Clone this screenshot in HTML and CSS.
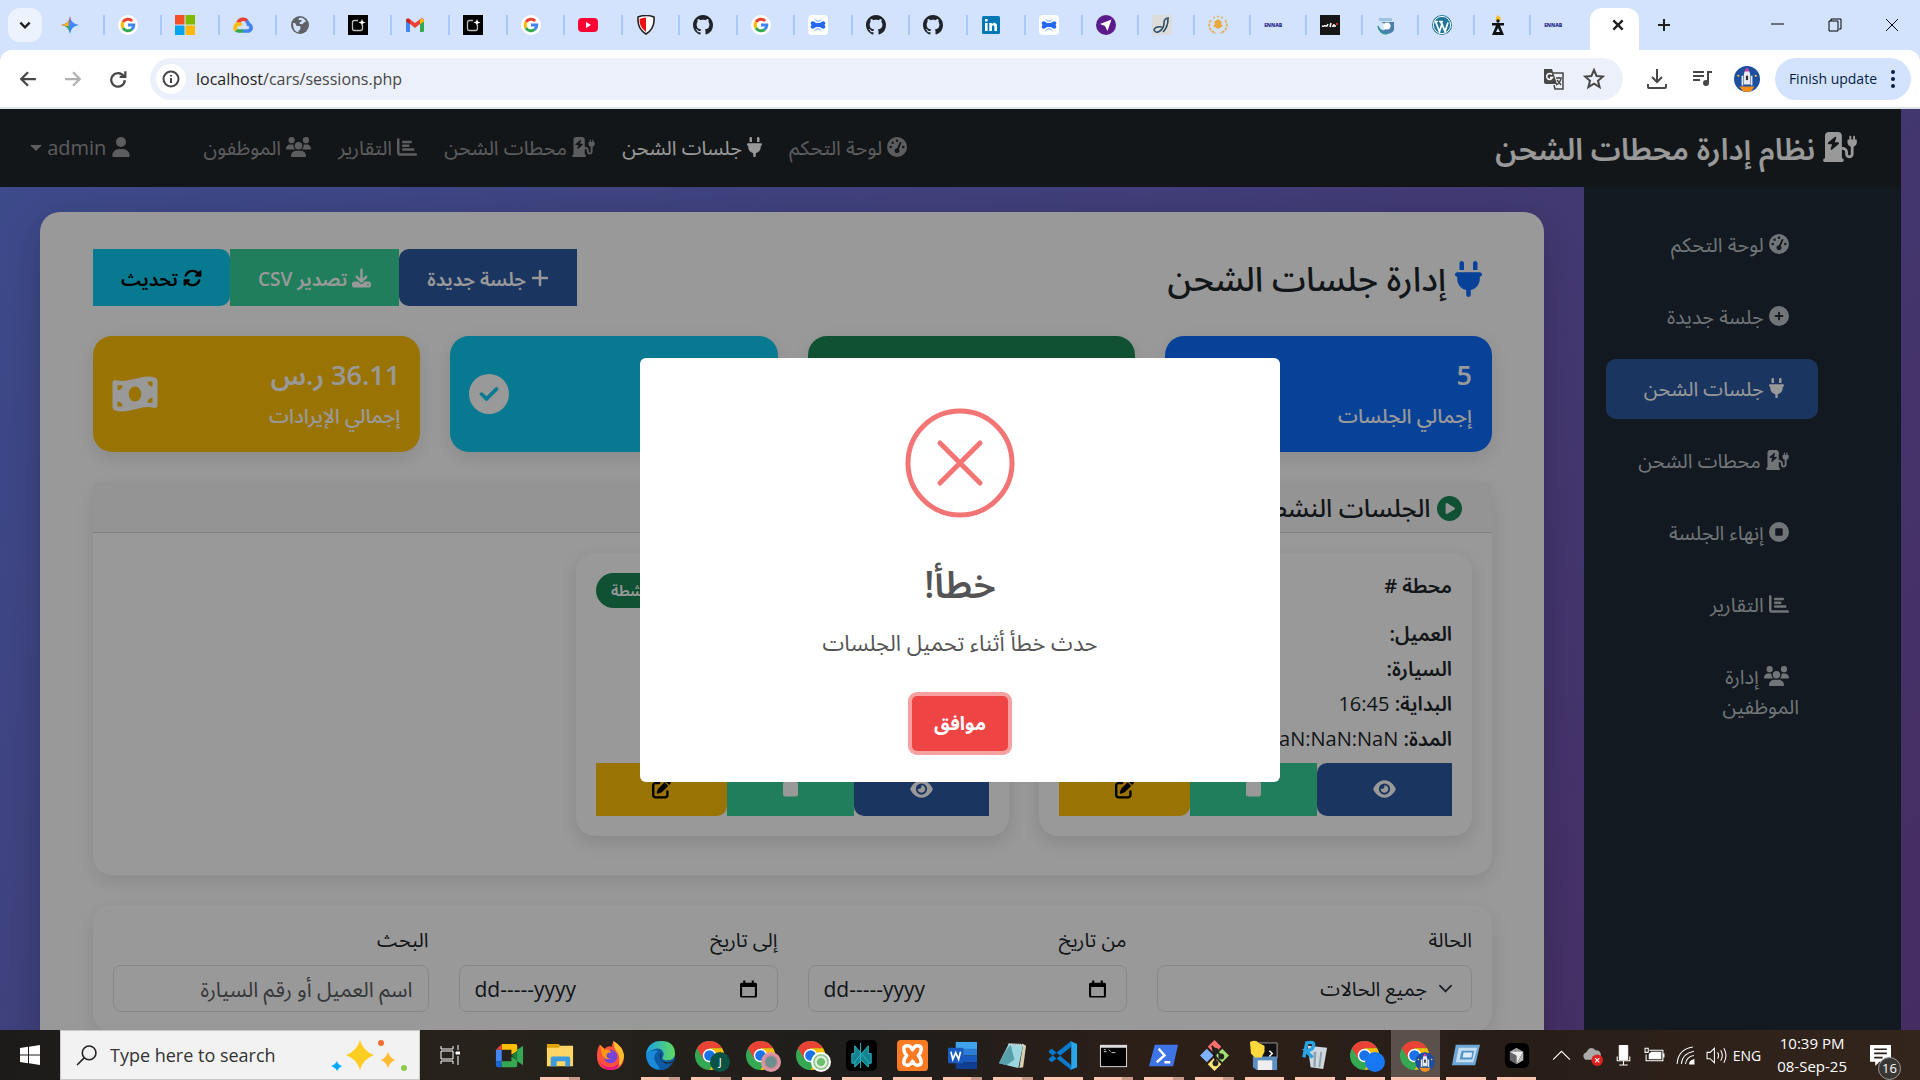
FILE: index.html
```html
<!DOCTYPE html>
<html lang="ar">
<head>
    <meta charset="UTF-8">
    <meta name="viewport" content="width=device-width, initial-scale=1.0">
    <title>إدارة جلسات الشحن</title>
    <link rel="stylesheet" href="styles.css">
</head>
<body>
    <svg class="defs" aria-hidden="true">
        <!-- page icons -->
        <symbol id="plug" viewBox="0 0 384 512"><path d="M96 0C78.3 0 64 14.3 64 32v96h64V32c0-17.7-14.3-32-32-32zM288 0c-17.7 0-32 14.3-32 32v96h64V32c0-17.7-14.3-32-32-32zM32 160c-17.7 0-32 14.3-32 32s14.3 32 32 32v32c0 77.4 55 142 128 156.8V480c0 17.7 14.3 32 32 32s32-14.3 32-32V412.8C297 398 352 333.4 352 256V224c17.7 0 32-14.3 32-32s-14.3-32-32-32H32z"/></symbol>
        <symbol id="gauge" viewBox="0 0 512 512"><path fill-rule="evenodd" d="M0 256a256 256 0 1 1 512 0A256 256 0 1 1 0 256zM288 96a32 32 0 1 0-64 0 32 32 0 1 0 64 0zM256 416c35.3 0 64-28.7 64-64c0-17.4-6.9-33.1-18.1-44.6L366 161.7c5.3-12.1-.2-26.3-12.3-31.6s-26.3 .2-31.6 12.3L257.9 288c-.6 0-1.3 0-1.9 0c-35.3 0-64 28.7-64 64s28.7 64 64 64zM176 144a32 32 0 1 0-64 0 32 32 0 1 0 64 0zM96 288a32 32 0 1 0 0-64 32 32 0 1 0 0 64zm352-32a32 32 0 1 0-64 0 32 32 0 1 0 64 0z"/></symbol>
        <symbol id="station" viewBox="0 0 576 512"><path fill-rule="evenodd" d="M96 0C60.7 0 32 28.7 32 64V448c-17.7 0-32 14.3-32 32s14.3 32 32 32H320c17.7 0 32-14.3 32-32s-14.3-32-32-32V304h16c22.1 0 40 17.9 40 40v32c0 39.8 32.2 72 72 72s72-32.2 72-72V252.3c32.5-10.2 56-40.5 56-76.3V144c0-8.8-7.2-16-16-16H544V80c0-8.8-7.2-16-16-16s-16 7.2-16 16v48H480V80c0-8.8-7.2-16-16-16s-16 7.2-16 16v48H432c-8.8 0-16 7.2-16 16v32c0 35.8 23.5 66.1 56 76.3V376c0 13.3-10.7 24-24 24s-24-10.7-24-24V344c0-48.6-39.4-88-88-88H320V64c0-35.3-28.7-64-64-64H96zM216.9 82.7c6 4 8.5 11.5 6.3 18.3l-25 74.9H256c6.7 0 12.7 4.2 15 10.4s.5 13.3-4.6 17.7l-112 96c-5.5 4.7-13.4 5.1-19.3 1.1s-8.5-11.5-6.3-18.3l25-74.9H96c-6.7 0-12.7-4.2-15-10.4s-.5-13.3 4.6-17.7l112-96c5.5-4.7 13.4-5.1 19.3-1.1z"/></symbol>
        <symbol id="chart" viewBox="0 0 512 512"><path d="M32 32c17.7 0 32 14.3 32 32V400c0 8.8 7.2 16 16 16H480c17.7 0 32 14.3 32 32s-14.3 32-32 32H80c-44.2 0-80-35.8-80-80V64C0 46.3 14.3 32 32 32zm96 96c0-17.7 14.3-32 32-32l192 0c17.7 0 32 14.3 32 32s-14.3 32-32 32H160c-17.7 0-32-14.3-32-32zm32 64H288c17.7 0 32 14.3 32 32s-14.3 32-32 32H160c-17.7 0-32-14.3-32-32s14.3-32 32-32zm0 96H416c17.7 0 32 14.3 32 32s-14.3 32-32 32H160c-17.7 0-32-14.3-32-32s14.3-32 32-32z"/></symbol>
        <symbol id="users" viewBox="0 0 640 512"><path d="M144 0a80 80 0 1 1 0 160A80 80 0 1 1 144 0zM512 0a80 80 0 1 1 0 160A80 80 0 1 1 512 0zM0 298.7C0 239.8 47.8 192 106.7 192h42.7c15.9 0 31 3.5 44.6 9.7c-1.3 7.2-1.9 14.7-1.9 22.3c0 38.2 16.8 72.5 43.3 96c-.2 0-.4 0-.7 0H21.3C9.6 320 0 310.4 0 298.7zM405.3 320c-.2 0-.4 0-.7 0c26.6-23.5 43.3-57.8 43.3-96c0-7.6-.7-15-1.9-22.3c13.6-6.3 28.7-9.7 44.6-9.7h42.7C592.2 192 640 239.8 640 298.7c0 11.8-9.6 21.3-21.3 21.3H405.3zM224 224a96 96 0 1 1 192 0 96 96 0 1 1 -192 0zM128 485.3C128 411.7 187.7 352 261.3 352H378.7C452.3 352 512 411.7 512 485.3c0 14.7-11.9 26.7-26.7 26.7H154.7c-14.7 0-26.7-11.9-26.7-26.7z"/></symbol>
        <symbol id="user" viewBox="0 0 448 512"><path d="M224 256A128 128 0 1 0 224 0a128 128 0 1 0 0 256zm-45.7 48C79.8 304 0 383.8 0 482.3C0 498.7 13.3 512 29.7 512H418.3c16.4 0 29.7-13.3 29.7-29.7C448 383.8 368.2 304 269.7 304H178.3z"/></symbol>
        <symbol id="circle-plus" viewBox="0 0 512 512"><path fill-rule="evenodd" d="M256 512A256 256 0 1 0 256 0a256 256 0 1 0 0 512zM232 344V280H168c-13.3 0-24-10.7-24-24s10.7-24 24-24h64V168c0-13.3 10.7-24 24-24s24 10.7 24 24v64h64c13.3 0 24 10.7 24 24s-10.7 24-24 24H280v64c0 13.3-10.7 24-24 24s-24-10.7-24-24z"/></symbol>
        <symbol id="circle-stop" viewBox="0 0 512 512"><path fill-rule="evenodd" d="M256 512A256 256 0 1 0 256 0a256 256 0 1 0 0 512zM192 160H320c17.7 0 32 14.3 32 32V320c0 17.7-14.3 32-32 32H192c-17.7 0-32-14.3-32-32V192c0-17.7 14.3-32 32-32z"/></symbol>
        <symbol id="circle-play" viewBox="0 0 512 512"><path fill-rule="evenodd" d="M0 256a256 256 0 1 1 512 0A256 256 0 1 1 0 256zM188.3 147.1c-7.6 4.2-12.3 12.3-12.3 20.9V344c0 8.7 4.7 16.7 12.3 20.9s16.8 4.1 24.3-.5l144-88c7.1-4.4 11.5-12.1 11.5-20.5s-4.4-16.1-11.5-20.5l-144-88c-7.4-4.5-16.7-4.7-24.3-.5z"/></symbol>
        <symbol id="circle-check" viewBox="0 0 512 512"><path fill-rule="evenodd" d="M256 512A256 256 0 1 0 256 0a256 256 0 1 0 0 512zM369 209L241 337c-9.4 9.4-24.6 9.4-33.9 0l-64-64c-9.4-9.4-9.4-24.6 0-33.9s24.6-9.4 33.9 0l47 47L335 175c9.4-9.4 24.6-9.4 33.9 0s9.4 24.6 0 33.9z"/></symbol>
        <symbol id="plus" viewBox="0 0 448 512"><path d="M256 80c0-17.7-14.3-32-32-32s-32 14.3-32 32V224H48c-17.7 0-32 14.3-32 32s14.3 32 32 32H192V432c0 17.7 14.3 32 32 32s32-14.3 32-32V288H400c17.7 0 32-14.3 32-32s-14.3-32-32-32H256V80z"/></symbol>
        <symbol id="download" viewBox="0 0 512 512"><path fill-rule="evenodd" d="M288 32c0-17.7-14.3-32-32-32s-32 14.3-32 32V274.7l-73.4-73.4c-12.5-12.5-32.8-12.5-45.3 0s-12.5 32.8 0 45.3l128 128c12.5 12.5 32.8 12.5 45.3 0l128-128c12.5-12.5 12.5-32.8 0-45.3s-32.8-12.5-45.3 0L288 274.7V32zM64 352c-35.3 0-64 28.7-64 64v32c0 35.3 28.7 64 64 64H448c35.3 0 64-28.7 64-64V416c0-35.3-28.7-64-64-64H346.5l-45.3 45.3c-25 25-65.5 25-90.5 0L165.5 352H64zm368 56a24 24 0 1 1 0 48 24 24 0 1 1 0-48z"/></symbol>
        <symbol id="sync" viewBox="0 0 512 512"><path d="M142.9 142.9c62.2-62.2 162.7-62.5 225.3-1L327 183c-6.9 6.9-8.9 17.2-5.2 26.2s12.5 14.8 22.2 14.8H472c13.3 0 24-10.7 24-24V72c0-9.7-5.8-18.5-14.8-22.2s-19.3-1.7-26.2 5.2L413.4 96.6c-87.6-86.5-228.7-86.2-315.8 1C73.2 122 55.6 150.7 44.8 181.4c-5.9 16.7 2.9 34.9 19.5 40.8s34.9-2.9 40.8-19.5c7.7-21.8 20.2-42.3 37.8-59.8zM16 312V440c0 9.7 5.8 18.5 14.8 22.2s19.3 1.7 26.2-5.2l41.6-41.6c87.6 86.5 228.7 86.2 315.8-1c24.4-24.4 42.1-53.1 52.9-83.7c5.9-16.7-2.9-34.9-19.5-40.8s-34.9 2.9-40.8 19.5c-7.7 21.8-20.2 42.3-37.8 59.8c-62.2 62.2-162.7 62.5-225.3 1L185 329c6.9-6.9 8.9-17.2 5.2-26.2s-12.5-14.8-22.2-14.8H40c-13.3 0-24 10.7-24 24z"/></symbol>
        <symbol id="money" viewBox="0 0 576 512"><path fill-rule="evenodd" d="M0 112.5V422.3c0 18 10.1 35 27 41.3c87 32.5 174 10.3 261-11.9c79.8-20.3 159.6-40.7 239.3-18.9c23 6.3 48.7-9.5 48.7-33.4V89.7c0-18-10.1-35-27-41.3C462 15.9 375 38.1 288 60.3C208.2 80.6 128.4 100.9 48.7 79.1C25.6 72.8 0 88.6 0 112.5zM288 352c-44.2 0-80-43-80-96s35.8-96 80-96s80 43 80 96s-35.8 96-80 96zM64 352c35.3 0 64 28.7 64 64H64V352zm64-208c0 35.3-28.7 64-64 64V144h64zM512 304v64H448c0-35.3 28.7-64 64-64zM448 96h64v64c-35.3 0-64-28.7-64-64z"/></symbol>
        <symbol id="eye" viewBox="0 0 576 512"><path fill-rule="evenodd" d="M288 32c-80.8 0-145.5 36.8-192.6 80.6C48.6 156 17.3 208 2.5 243.7c-3.3 7.9-3.3 16.7 0 24.6C17.3 304 48.6 356 95.4 399.4C142.5 443.2 207.2 480 288 480s145.5-36.8 192.6-80.6c46.8-43.5 78.1-95.4 93-131.1c3.3-7.9 3.3-16.7 0-24.6c-14.9-35.7-46.2-87.7-93-131.1C433.5 68.8 368.8 32 288 32zM144 256a144 144 0 1 1 288 0 144 144 0 1 1 -288 0zm144-64c0 35.3-28.7 64-64 64c-7.1 0-13.9-1.2-20.3-3.3c-5.5-1.8-11.9 1.6-11.7 7.4c.3 6.9 1.3 13.8 3.2 20.7c13.7 51.2 66.4 81.6 117.6 67.9s81.6-66.4 67.9-117.6c-11.1-41.5-47.8-69.4-88.6-71.1c-5.8-.2-9.2 6.1-7.4 11.7c2.1 6.4 3.3 13.2 3.3 20.3z"/></symbol>
        <symbol id="stop" viewBox="0 0 384 512"><rect x="0" y="64" width="384" height="384" rx="64"/></symbol>
        <symbol id="edit" viewBox="0 0 512 512"><path d="M471.6 21.7c-21.9-21.9-57.3-21.9-79.2 0L362.3 51.7l97.9 97.9 30.1-30.1c21.9-21.9 21.9-57.3 0-79.2L471.6 21.7zm-299.2 220c-6.1 6.1-10.8 13.6-13.5 21.9l-29.6 88.8c-2.9 8.6-.6 18.1 5.8 24.6s15.9 8.7 24.6 5.8l88.8-29.6c8.2-2.7 15.7-7.4 21.9-13.5L437.7 172.3 339.7 74.3 172.4 241.7zM96 64C43 64 0 107 0 160V416c0 53 43 96 96 96H352c53 0 96-43 96-96V320c0-17.7-14.3-32-32-32s-32 14.3-32 32v96c0 17.7-14.3 32-32 32H96c-17.7 0-32-14.3-32-32V160c0-17.7 14.3-32 32-32h96c17.7 0 32-14.3 32-32s-14.3-32-32-32H96z"/></symbol>
        <symbol id="calendar" viewBox="0 0 16 16"><path fill-rule="evenodd" d="M3 0h2v2h6V0h2v2h1.500q1.500 0 1.500 1.500v11q0 1.500-1.500 1.500h-13Q0 16 0 14.500v-11Q0 2 1.500 2H3zM2 6v8.500h12V6z"/></symbol>

        <!-- tab icons -->
        <linearGradient id="gem" x1="0" y1="0" x2="1" y2="1"><stop offset=".2" stop-color="#ea4335"/><stop offset=".45" stop-color="#4f86f5"/><stop offset=".7" stop-color="#3186ff"/></linearGradient>
        <symbol id="t-gemini" viewBox="0 0 20 20"><path fill="url(#gem)" d="M10 1q1 8 9 9-8 1-9 9-1-8-9-9 8-1 9-9z"/><path fill="#fbbc04" d="M1 10q6-.6 8-5-1 5 0 7-3-1.600-8-2z"/><path fill="#34a853" d="M5 11q3 1 4.500 5V11z"/></symbol>
        <symbol id="t-google" viewBox="0 0 20 20"><circle cx="10" cy="10" r="10" fill="#fff"/><g fill="none" stroke-width="3"><path stroke="#ea4335" d="M5 7.100A5.800 5.800 0 0 1 14.200 6"/><path stroke="#fbbc05" d="M5 7.100a5.800 5.800 0 0 0 0 5.800"/><path stroke="#34a853" d="M5 12.900a5.800 5.800 0 0 0 8.800 1.400"/><path stroke="#4285f4" d="M10 10h5.800a5.800 5.800 0 0 1-2 4.300"/></g></symbol>
        <symbol id="t-ms" viewBox="0 0 20 20"><path fill="#f25022" d="M0 0h9.500v9.500H0z"/><path fill="#7fba00" d="M10.500 0H20v9.500h-9.500z"/><path fill="#00a4ef" d="M0 10.500h9.500V20H0z"/><path fill="#ffb900" d="M10.500 10.500H20V20h-9.500z"/></symbol>
        <symbol id="t-cloud" viewBox="0 0 20 20"><g fill="none" stroke-width="3.600"><path stroke="#ea4335" d="M5 8a5.300 5.300 0 0 1 9-2"/><path stroke="#4285f4" d="M13.500 5.800a5 5 0 0 1 1.800 3.400 3.500 3.500 0 0 1 .2 6.800H10"/><path stroke="#34a853" d="M10 16H5.500a4 4 0 0 1-2.500-1"/><path stroke="#fbbc05" d="M3.200 15.200A3.800 3.800 0 0 1 5.500 8.800q1.500 0 3 1.500"/></g></symbol>
        <symbol id="t-globe" viewBox="0 0 20 20"><circle cx="10" cy="10" r="9" fill="#5f6368"/><path fill="#d3e3fd" d="M3 8q3-.5 3 1.500t2.500 1.500 2 2-1.500 2.500-.5 2Q3 16.500 3 8zM9 3q5-1 7 4-2-.5-2.500 1T10.500 9 11 6.500 8.500 5z"/></symbol>
        <symbol id="t-tile" viewBox="0 0 20 20"><path fill="#000" d="M0 0h20v20H0z"/><path fill="none" stroke="#bbb" stroke-width="1.300" d="M10 5.500H6.500q-2 0-2 2v6q0 2 2 2h6q2 0 2-2V10"/><path fill="#fff" d="M14 4l1 2.500 2.500 1-2.500 1-1 2.500-1-2.500-2.500-1 2.500-1z"/></symbol>
        <symbol id="t-gmail" viewBox="0 0 20 20"><path fill="#4285f4" d="M1 6v10q0 1 1 1h3V8z"/><path fill="#34a853" d="M19 6v10q0 1-1 1h-3V8z"/><path fill="#ea4335" d="M1 5.500q.5-3 3-2l6 4.500 6-4.500q2.500-1 3 2L15 9l-5 4-5-4z"/><path fill="#c5221f" d="M1 5.500q.5-3 4-1V9L1 6.500z"/><path fill="#fbbc04" d="M19 5.500q-.5-3-4-1V9l4-2.500z"/></symbol>
        <symbol id="t-youtube" viewBox="0 0 20 20"><rect y="3" width="20" height="14" rx="4" fill="#f03"/><path fill="#fff" d="M8 7l5 3-5 3z"/></symbol>
        <symbol id="t-shield" viewBox="0 0 20 20"><path fill="#fff" stroke="#222" stroke-width="1.600" d="M2 2q8-3 16 0 1 12-8 17Q1 14 2 2z"/><path fill="#e11" d="M3.500 4q3-1.500 6.500-1.500V17q-7-5-6.500-13z"/></symbol>
        <symbol id="t-github" viewBox="0 0 16 16"><path fill="#1f2328" d="M8 0C3.580 0 0 3.580 0 8c0 3.540 2.290 6.530 5.470 7.590.4.070.55-.17.55-.38 0-.19-.01-.82-.01-1.490-2.010.37-2.530-.49-2.690-.94-.09-.23-.48-.94-.82-1.130-.28-.15-.68-.52-.01-.53.63-.01 1.080.58 1.230.82.72 1.210 1.870.87 2.330.66.07-.52.28-.87.51-1.070-1.780-.2-3.640-.89-3.640-3.950 0-.87.31-1.590.82-2.150-.08-.2-.36-1.020.08-2.120 0 0 .67-.21 2.200.82.64-.18 1.320-.27 2-.27s1.360.09 2 .27c1.530-1.040 2.200-.82 2.200-.82.44 1.100.16 1.920.08 2.120.51.56.82 1.270.82 2.150 0 3.070-1.870 3.750-3.650 3.950.29.25.54.73.54 1.480 0 1.070-.01 1.930-.01 2.200 0 .21.15.46.55.38A8.010 8.010 0 0 0 16 8c0-4.420-3.580-8-8-8z"/></symbol>
        <symbol id="t-bone" viewBox="0 0 20 20"><rect width="20" height="20" rx="4" fill="#fff"/><path fill="#9cc4ff" d="M6 3q4 5 8 0-1 4-4 4T6 3zm0 14q4-5 8 0-1-4-4-4t-4 4z"/><path fill="#2468f2" d="M3 7q2-2 5 1h4q3-3 5-1 1 1.500-.5 3 1.500 1.500.5 3-2 2-5-1H8q-3 3-5 1-1-1.500.5-3Q2 8.500 3 7z"/></symbol>
        <symbol id="t-linkedin" viewBox="0 0 20 20"><rect x="1" y="1" width="18" height="18" rx="1.500" fill="#0077b5"/><path fill="#fff" d="M4 8h2.600v8H4zM4 4h2.600v2.500H4zM8.300 8h2.500v1.200q2.800-2.800 5.200.3V16h-2.600v-4.500q-1.300-2.500-2.500 0V16H8.300z"/></symbol>
        <symbol id="t-send" viewBox="0 0 20 20"><circle cx="10" cy="10" r="10" fill="#5b1a8b"/><path fill="#fff" d="M15.500 4.500l-4 11.500-2.500-5-5-2z"/></symbol>
        <symbol id="t-script" viewBox="0 0 20 20"><path fill="#dcdcdc" d="M0 0h20v20H0z"/><path fill="none" stroke="#2f4f66" stroke-width="1.600" d="M17 3q-5 0-5 5t-4 8-6-1q1-4 8-3M16 4q0 8-5 13"/></symbol>
        <symbol id="t-gold" viewBox="0 0 20 20"><path fill="none" stroke="#dfb35c" stroke-width="1.800" stroke-dasharray="3 1" d="M3 5a8 8 0 0 0 5 13M17 5a8 8 0 0 1-5 13"/><path fill="#e9a93f" d="M10 4l4 3-1 2 2 2-5 3-5-3 2-2-1-2z"/><circle cx="10" cy="1.500" r="1" fill="#dfb35c"/><circle cx="6" cy="2.500" r="1" fill="#dfb35c"/><circle cx="14" cy="2.500" r="1" fill="#dfb35c"/></symbol>
        <symbol id="t-dark" viewBox="0 0 20 20"><path fill="#161616" d="M0 0h20v20H0z"/><path fill="none" stroke="#fff" stroke-width="1.500" d="M2 11q2 1 3-1m0 1h2l1-2M10 12l1-4m1 3q2 1 2-2m0 2h2"/><path stroke="#e33" stroke-width="1.500" d="M16 9h2"/></symbol>
        <symbol id="t-swirl" viewBox="0 0 20 20"><path fill="#9dc3e0" d="M3 3h13v3H3z"/><path fill="#4a7fae" d="M5 7h13v8q-2 4-8 4-7 0-8-8 3 5 7 4V9z"/><circle cx="11" cy="11" r="3.500" fill="#fff"/><path stroke="#2b9b95" stroke-width="1.500" fill="none" d="M2 11q2 8 9 8"/></symbol>
        <symbol id="t-wp" viewBox="0 0 20 20"><circle cx="10" cy="10" r="10" fill="#21759b"/><circle cx="10" cy="10" r="8.600" fill="none" stroke="#fff"/><path fill="none" stroke="#fff" stroke-width="1.700" d="M3.500 6.500l4 10L10 9l3 7.500 3-9M8.500 6.500L11 12M2.500 6.500H6M7 6.500h4"/></symbol>
        <symbol id="t-tower" viewBox="0 0 20 20"><path fill="#fb0" d="M10 0q4 4 2 6H8Q7 3 10 0z"/><path fill="#111" d="M4 8h12v2.500H12L16 20H4l4-9.500H4zM10 13l-2 4h4z"/><circle cx="10" cy="6" r="1.700" fill="#111"/></symbol>
        <symbol id="rocket" viewBox="0 0 24 24"><circle cx="12" cy="12" r="12" fill="#1c4fa0"/><path fill="#e8e8ee" d="M12 2q3 3 3 7v8H9V9q0-4 3-7zM7 9h1.500v9H7zM15.500 9H17v9h-1.500z"/><path fill="#d33aa0" d="M11 2h2l1 3h-4z"/><path fill="#f28c1c" d="M5 19h14l-3 4q-4 2-8 0z"/><path fill="#333" d="M11 9h2v4h-2z"/><circle cx="4" cy="9" r="1" fill="#fc3"/><circle cx="20" cy="9" r="1" fill="#fc3"/></symbol>

        <!-- taskbar icons -->
        <symbol id="b-chrome" viewBox="0 0 32 32"><circle cx="15" cy="16" r="15" fill="#34a853"/><path fill="#ea4335" d="M2 8.500A15 15 0 0 1 28 8.500H15L9 20z"/><path fill="#fbbc04" d="M28 8.500A15 15 0 0 1 15 31l6.500-11.500L15 8.500z"/><circle cx="15" cy="16" r="7" fill="#fff"/><circle cx="15" cy="16" r="5.500" fill="#1a73e8"/></symbol>
        <symbol id="b-meet" viewBox="0 0 32 32"><path fill="#fbbc04" d="M8 4h14q2 0 2 2v6l-6 3v-5H8z"/><path fill="#4285f4" d="M2 10h6v12H2z"/><path fill="#ea4335" d="M8 4v6H2z"/><path fill="#1967d2" d="M2 22h6v6H4q-2 0-2-2z"/><path fill="#34a853" d="M8 22h10v-5l6 4v5q0 2-2 2H8z"/><path fill="#188038" d="M18 16l8-7v14z"/><path fill="#34a853" d="M24 10l6-4v20l-6-4z"/></symbol>
        <symbol id="b-folder" viewBox="0 0 32 32"><path fill="#e0a106" d="M3 4h12l3 3v4H3z"/><path fill="#ffd566" d="M3 8h12l2-2h13v21H3z"/><path fill="#3a9be0" d="M9 17h16q2 0 2 2v8h-5v-5h-9v5H7v-8q0-2 2-2z"/></symbol>
        <symbol id="b-firefox" viewBox="0 0 32 32"><path fill="#ff4f3d" d="M5 5l5 4q3-4 7-2l2-6q10 6 11 15 0 15-14 15T2 16Q2 9 5 5z"/><path fill="#ffbd2e" d="M19 1q10 6 11 15-1 9-6 11 3-9-1-14T19 1z"/><path fill="#e31587" d="M3 20q5 9 14 8 6-1 8-5-1 8-9 8T3 20z"/><circle cx="16" cy="17" r="7" fill="#7544d8"/><path fill="#ff980e" d="M5 5l5 5q5-1 7 3-5-1-5 3t5 3q-8 3-10-5z"/></symbol>
        <linearGradient id="edg" x1="0" y1="0" x2="1" y2="0"><stop offset="0" stop-color="#1aa0e8"/><stop offset="1" stop-color="#60dc5a"/></linearGradient>
        <symbol id="b-edge" viewBox="0 0 32 32"><circle cx="16" cy="16" r="15" fill="#0c59a4"/><path fill="url(#edg)" d="M1 15Q3 1 17 1t14 14q-1 6-8 6-5 0-5-3 3-4-1-8-7-4-16 5z"/><path fill="#1b8ad8" d="M1 15q6-6 13-4-6 4-4 10t9 9Q3 33 1 15z"/><path fill="#26221d" d="M17 13q-3 4 0 8 5 4 12 1l3 1-3 6q-5 0-9-5-5-3-3-11z"/><path fill="#0c59a4" d="M14 16q-1 6 6 8 5 1 9-1-5 8-13 8-5-6-2-15z"/></symbol>
        <symbol id="b-perplexity" viewBox="0 0 32 32"><rect width="32" height="32" rx="5" fill="#000"/><path fill="#16838f" stroke="#22b8c6" stroke-width="1" d="M15 3v26M16 14L9 6v8H6v10h3v4l7-7 7 7v-4h3V14h-3V6zM16 14L8 24M16 14l8 10"/></symbol>
        <symbol id="b-xampp" viewBox="0 0 32 32"><rect width="32" height="32" rx="4" fill="#fb7a24"/><path fill="none" stroke="#fff" stroke-width="3.500" stroke-linejoin="round" d="M7 9q0-3 4-3 3 0 5 4 2-4 5-4 4 0 4 3 0 4-3 7 3 3 3 7 0 3-4 3-3 0-5-4-2 4-5 4-4 0-4-3 0-4 3-7-3-3-3-7z"/></symbol>
        <symbol id="b-word" viewBox="0 0 32 32"><path fill="#41a5ee" d="M9 2h22v8H9z"/><path fill="#2b7cd3" d="M9 9h22v7H9z"/><path fill="#185abd" d="M9 16h22v7H9z"/><path fill="#103f91" d="M9 23h22v7H9z"/><rect x="1" y="8" width="16" height="16" rx="1" fill="#185abd"/><path fill="none" stroke="#fff" stroke-width="1.800" d="M4 12l2 8 3-7 3 7 2-8"/></symbol>
        <symbol id="b-notepad" viewBox="0 0 32 32"><path fill="#d8cfae" d="M27 4l3 2-3 22-4 1z"/><path fill="#9cd6de" d="M12 4l15 1-5 24-20-5z"/><path fill="#3b8796" d="M10 10l4-5 4 15-8 6-8-2z" opacity=".7"/><path stroke="#eee" stroke-width="2" stroke-dasharray="1 1" d="M12 4l15 1"/></symbol>
        <symbol id="b-vscode" viewBox="0 0 32 32"><path fill="#0a7acc" d="M1 11l3-2 20 17v5L1 13zM1 21l3 2L24 7V1L1 19z"/><path fill="#28a8ea" d="M23 1l7 3v24l-7 3q1-1 1-3V4q0-2-1-3z"/></symbol>
        <symbol id="b-cmd" viewBox="0 0 32 32"><path fill="#ddd" d="M2 5h28v23H2z"/><path fill="#000" d="M3 8h26v19H3z"/><path stroke="#ccc" fill="none" d="M6 10h2M6 12h3M11 10l2 2M14 13h4"/></symbol>
        <symbol id="b-ps" viewBox="0 0 32 32"><path fill="#3e74e6" d="M7 5h24l-5 22H1z"/><path fill="none" stroke="#fff" stroke-width="2.500" d="M11 9l6 7-8 7M17 23h6"/></symbol>
        <symbol id="b-git" viewBox="0 0 32 32"><path fill="#ff6f6f" d="M16 0l7 7-7 7-7-7z"/><path fill="#80b3ff" d="M8 9l7 7-7 7-7-7z"/><path fill="#a0e070" d="M24 9l7 7-7 7-7-7z"/><path fill="#ffe27a" d="M16 18l7 7-7 7-7-7z"/><path stroke="#222" stroke-width="2" d="M13 6l4 4v15M17 11l6 5"/><g fill="#222"><circle cx="17" cy="11" r="3"/><circle cx="17" cy="24" r="3"/><circle cx="23" cy="17" r="3"/></g></symbol>
        <symbol id="b-disk" viewBox="0 0 32 32"><path fill="#111" stroke="#999" d="M9 3h20v16H9z"/><path fill="#5d8fc2" d="M4 17h25v14H8l-4-3z"/><path fill="#eee" d="M9 21h15v10H9z"/><path fill="#ffd83b" d="M1 2q6-3 9 1l6 3v6l-3 6H6L2 14z"/><path fill="none" stroke="#fff" stroke-width="1.500" d="M21 11l3 3-3 3"/></symbol>
        <symbol id="b-bin" viewBox="0 0 32 32"><path fill="#cfd8de" d="M9 6l20 2-4 22-13-2z"/><path fill="#8fa3ae" d="M15 12l3 0-1 16h-2zM22 12h2l-2 16h-2z"/><path fill="none" stroke="#29a3e2" stroke-width="3.500" d="M5 18L8 3q8-2 7 3t-8 5l7 7"/></symbol>
        <symbol id="b-window" viewBox="0 0 32 32"><path fill="#6ea6d6" d="M6 5h25l-5 21H2z"/><path fill="#c6def0" d="M9 8h19l-4 15H6z"/><path fill="#4f93c9" d="M12 11h13l-2 9H10z"/><path fill="#dcecf8" d="M14 13h9l-1 5h-9z"/></symbol>
        <symbol id="b-cube" viewBox="0 0 32 32"><rect x="4" y="3" width="25" height="26" rx="6" fill="#000"/><path fill="#999" d="M16 8l7 4-7 4-7-4z"/><path fill="#666" d="M9 12l7 4v9l-7-4z"/><path fill="#eee" d="M9 12l14 0-7 13v-9z"/><path fill="#bbb" d="M23 12v9l-7 4z"/></symbol>
    </svg>

    <header class="browser">
        <div class="tabs">
            <button class="tab-search" aria-label="Search tabs"><svg viewBox="0 0 12 12"><path d="M2 4l4 4 4-4"/></svg></button>
            <nav class="tab-list" aria-label="Tabs">
                <a href="#"><svg><use href="#t-gemini"/></svg></a>
                <a href="#"><svg><use href="#t-google"/></svg></a>
                <a href="#"><svg><use href="#t-ms"/></svg></a>
                <a href="#"><svg><use href="#t-cloud"/></svg></a>
                <a href="#"><svg><use href="#t-globe"/></svg></a>
                <a href="#"><svg><use href="#t-tile"/></svg></a>
                <a href="#"><svg><use href="#t-gmail"/></svg></a>
                <a href="#"><svg><use href="#t-tile"/></svg></a>
                <a href="#"><svg><use href="#t-google"/></svg></a>
                <a href="#"><svg><use href="#t-youtube"/></svg></a>
                <a href="#"><svg><use href="#t-shield"/></svg></a>
                <a href="#"><svg><use href="#t-github"/></svg></a>
                <a href="#"><svg><use href="#t-google"/></svg></a>
                <a href="#"><svg><use href="#t-bone"/></svg></a>
                <a href="#"><svg><use href="#t-github"/></svg></a>
                <a href="#"><svg><use href="#t-github"/></svg></a>
                <a href="#"><svg><use href="#t-linkedin"/></svg></a>
                <a href="#"><svg><use href="#t-bone"/></svg></a>
                <a href="#"><svg><use href="#t-send"/></svg></a>
                <a href="#"><svg><use href="#t-script"/></svg></a>
                <a href="#"><svg><use href="#t-gold"/></svg></a>
                <a href="#" class="word">ENNAB</a>
                <a href="#"><svg><use href="#t-dark"/></svg></a>
                <a href="#"><svg><use href="#t-swirl"/></svg></a>
                <a href="#"><svg><use href="#t-wp"/></svg></a>
                <a href="#"><svg><use href="#t-tower"/></svg></a>
                <a href="#" class="word">ENNAB</a>
            </nav>
            <div class="tab-active"><button aria-label="Close tab"><svg viewBox="0 0 12 12"><path d="M2 2l8 8M10 2l-8 8"/></svg></button></div>
            <button class="tab-new" aria-label="New tab"><svg viewBox="0 0 14 14"><path d="M7 1v12M1 7h12"/></svg></button>
            <div class="window-buttons">
                <button aria-label="Minimize"><svg viewBox="0 0 14 14"><path d="M0 6h13"/></svg></button>
                <button aria-label="Restore"><svg viewBox="0 0 14 14"><path d="M1 3h9v10H1zM3 3V1h10v10h-2"/></svg></button>
                <button aria-label="Close"><svg viewBox="0 0 14 14"><path d="M1 1l12 12M13 1L1 13"/></svg></button>
            </div>
        </div>
        <div class="toolbar">
            <button class="tool" aria-label="Back"><svg viewBox="0 0 16 16"><path d="M15 8H2M8 2L2 8l6 6"/></svg></button>
            <button class="tool muted" aria-label="Forward"><svg viewBox="0 0 16 16"><path d="M1 8h13M8 2l6 6-6 6"/></svg></button>
            <button class="tool" aria-label="Reload"><svg viewBox="0 0 16 16"><path d="M13 5.500A6 6 0 1 0 14 9M14.500 1v5H9.500"/></svg></button>
            <div class="address">
                <span class="site-info"><svg viewBox="0 0 18 18"><circle cx="9" cy="9" r="7.500"/><path d="M9 8v5M9 5v1.500"/></svg></span>
                <a href="#" class="url">localhost<span>/cars/sessions.php</span></a>
                <button aria-label="Translate"><svg viewBox="0 0 22 22"><path fill="#474747" stroke="none" d="M1 1h8l5 15H3q-2 0-2-2z"/><path stroke-width="1.500" d="M10 5h10v16h-8l-1-4M13 10h6M16 9v1M18 11q-2 5-5 6M14 12l4 5"/><path stroke="#fff" stroke-width="1.500" d="M9 6.500a3 3 0 1 0 .5 3H7"/></svg></button>
                <button aria-label="Bookmark"><svg viewBox="0 0 22 22"><path d="M11 2l2.600 6 6.400.500-5 4.300 1.600 6.400L11 15.700l-5.600 3.500L7 12.800 2 8.500 8.400 8z"/></svg></button>
            </div>
            <button class="tool" aria-label="Downloads"><svg class="big" viewBox="0 0 22 22"><path d="M11 1v12M6 9l5 5 5-5M2 16v3q0 1 1 1h16q1 0 1-1v-3"/></svg></button>
            <button class="tool" aria-label="Media"><svg class="big" viewBox="0 0 22 22"><path d="M2 4h11M2 8h11M2 12h7M21 4h-4v10"/><circle cx="15" cy="15" r="2" fill="#474747"/></svg></button>
            <button class="tool" aria-label="Profile"><svg class="avatar"><use href="#rocket"/></svg></button>
            <button class="update">Finish update <svg viewBox="0 0 4 20"><circle cx="2" cy="3" r="2"/><circle cx="2" cy="10" r="2"/><circle cx="2" cy="17" r="2"/></svg></button>
        </div>
    </header>

    <div class="page" dir="rtl">
        <nav class="navbar">
            <a href="#" class="brand"><svg class="icon wide"><use href="#station"/></svg> نظام إدارة محطات الشحن</a>
            <div class="nav-links">
                <a href="#"><svg class="icon"><use href="#gauge"/></svg> لوحة التحكم</a>
                <a href="#" class="active"><svg class="icon narrow"><use href="#plug"/></svg> جلسات الشحن</a>
                <a href="#"><svg class="icon wide"><use href="#station"/></svg> محطات الشحن</a>
                <a href="#"><svg class="icon"><use href="#chart"/></svg> التقارير</a>
                <a href="#"><svg class="icon wider"><use href="#users"/></svg> الموظفون</a>
            </div>
            <a href="#" class="account"><svg class="icon user"><use href="#user"/></svg> admin <i class="caret"></i></a>
        </nav>

        <div class="columns">
            <aside class="sidebar">
                <a href="#"><svg class="icon"><use href="#gauge"/></svg> لوحة التحكم</a>
                <a href="#"><svg class="icon"><use href="#circle-plus"/></svg> جلسة جديدة</a>
                <a href="#" class="active"><svg class="icon narrow"><use href="#plug"/></svg> جلسات الشحن</a>
                <a href="#"><svg class="icon wide"><use href="#station"/></svg> محطات الشحن</a>
                <a href="#"><svg class="icon"><use href="#circle-stop"/></svg> إنهاء الجلسة</a>
                <a href="#"><svg class="icon"><use href="#chart"/></svg> التقارير</a>
                <a href="#"><svg class="icon wider"><use href="#users"/></svg> إدارة<br>الموظفين</a>
            </aside>

            <main class="content">
                <div class="heading">
                    <h1><svg class="icon narrow"><use href="#plug"/></svg> إدارة جلسات الشحن</h1>
                    <div class="btn-group">
                        <button class="btn primary"><svg class="icon plus"><use href="#plus"/></svg> جلسة جديدة</button>
                        <button class="btn success"><svg class="icon"><use href="#download"/></svg> تصدير CSV</button>
                        <button class="btn info"><svg class="icon"><use href="#sync"/></svg> تحديث</button>
                    </div>
                </div>

                <section class="stats">
                    <div class="stat blue"><div><h2>5</h2><p>إجمالي الجلسات</p></div><svg class="icon narrow"><use href="#plug"/></svg></div>
                    <div class="stat green"><div><h2>2</h2><p>نشطة</p></div><svg class="icon"><use href="#circle-play"/></svg></div>
                    <div class="stat cyan"><div><h2>3</h2><p>مكتملة</p></div><svg class="icon"><use href="#circle-check"/></svg></div>
                    <div class="stat yellow"><div><h2>36.11 ر.س</h2><p>إجمالي الإيرادات</p></div><svg class="icon wide"><use href="#money"/></svg></div>
                </section>

                <section class="card">
                    <h3 class="card-header"><svg class="icon"><use href="#circle-play"/></svg> الجلسات النشطة</h3>
                    <div class="sessions">
                        <article class="session">
                            <header><h4>محطة #</h4><span class="badge">نشطة</span></header>
                            <p><b>العميل:</b></p>
                            <p><b>السيارة:</b></p>
                            <p><b>البداية:</b> 16:45</p>
                            <p><b>المدة:</b> NaN:NaN:NaN</p>
                            <div class="btn-group">
                                <button class="btn primary" aria-label="عرض"><svg class="icon wide"><use href="#eye"/></svg></button>
                                <button class="btn success" aria-label="إيقاف"><svg class="icon narrow"><use href="#stop"/></svg></button>
                                <button class="btn warning" aria-label="تعديل"><svg class="icon"><use href="#edit"/></svg></button>
                            </div>
                        </article>
                        <article class="session">
                            <header><h4>محطة #</h4><span class="badge">نشطة</span></header>
                            <p><b>العميل:</b></p>
                            <p><b>السيارة:</b></p>
                            <p><b>البداية:</b> 16:45</p>
                            <p><b>المدة:</b> NaN:NaN:NaN</p>
                            <div class="btn-group">
                                <button class="btn primary" aria-label="عرض"><svg class="icon wide"><use href="#eye"/></svg></button>
                                <button class="btn success" aria-label="إيقاف"><svg class="icon narrow"><use href="#stop"/></svg></button>
                                <button class="btn warning" aria-label="تعديل"><svg class="icon"><use href="#edit"/></svg></button>
                            </div>
                        </article>
                    </div>
                </section>

                <form class="card filters">
                    <div>
                        <label for="status">الحالة</label>
                        <select id="status" class="field"><option>جميع الحالات</option></select>
                    </div>
                    <div>
                        <label for="dateFrom">من تاريخ</label>
                        <div class="field date" dir="ltr"><input type="text" id="dateFrom" placeholder="dd-----yyyy"><svg><use href="#calendar"/></svg></div>
                    </div>
                    <div>
                        <label for="dateTo">إلى تاريخ</label>
                        <div class="field date" dir="ltr"><input type="text" id="dateTo" placeholder="dd-----yyyy"><svg><use href="#calendar"/></svg></div>
                    </div>
                    <div>
                        <label for="search">البحث</label>
                        <input type="text" id="search" class="field" placeholder="اسم العميل أو رقم السيارة">
                    </div>
                </form>
            </main>
        </div>

        <div class="overlay">
            <div class="modal" role="dialog" aria-labelledby="modalTitle">
                <svg class="modal-icon" viewBox="0 0 110 110"><circle cx="55" cy="55" r="52"/><path d="M35 35l40 40M75 35L35 75"/></svg>
                <h2 id="modalTitle">خطأ!</h2>
                <p>حدث خطأ أثناء تحميل الجلسات</p>
                <button>موافق</button>
            </div>
        </div>
    </div>

    <footer class="taskbar">
        <button class="start" aria-label="Start"><svg viewBox="0 0 20 20"><path d="M0 3l8-1.200v7.700H0zM9 1.700L20 0v9.500H9zM0 10.500h8v7.700L0 17zM9 10.500h11V20L9 18.300z"/></svg></button>
        <div class="search-box">
            <svg class="lens" viewBox="0 0 20 20"><circle cx="12.500" cy="7.500" r="6.500"/><path d="M8 12l-7 7"/></svg>
            <input type="text" aria-label="Search" placeholder="Type here to search">
            <svg class="sparkles" viewBox="0 0 76 32"><path fill="#fc2" d="M29 1q3 11 14 15-11 4-14 15-3-11-14-15 11-4 14-15z"/><path fill="#fb3" d="M57 13q2 6 7 8-5 2-7 8-2-6-7-8 5-2 7-8z"/><path fill="#0af" d="M6 22q1 4 5 5-4 2-5 5-1-3-6-5 4-1 6-5z"/><circle cx="50" cy="4" r="3" fill="#f26a35"/><circle cx="73" cy="29" r="3" fill="#8cc84b"/></svg>
        </div>
        <button class="task-view" aria-label="Task view"><svg viewBox="0 0 20 20"><path d="M1 1v3h12V1M1 6h12v8H1zM1 19v-3h12v3M18 0v5M18 11v9"/><path d="M16 7h4v2h-4z" fill="#fff"/></svg></button>
        <nav class="apps" aria-label="Apps">
            <a href="#"><svg><use href="#b-meet"/></svg></a>
            <a href="#" class="open stacked"><svg><use href="#b-folder"/></svg></a>
            <a href="#"><svg><use href="#b-firefox"/></svg></a>
            <a href="#" class="open stacked"><svg><use href="#b-edge"/></svg></a>
            <a href="#" class="open stacked"><svg><use href="#b-chrome"/></svg><i class="who teal">J</i></a>
            <a href="#" class="open"><svg><use href="#b-chrome"/></svg><i class="who pink"></i></a>
            <a href="#" class="open"><svg><use href="#b-chrome"/></svg><i class="who pale"></i></a>
            <a href="#" class="open"><svg><use href="#b-perplexity"/></svg></a>
            <a href="#" class="open"><svg><use href="#b-xampp"/></svg></a>
            <a href="#" class="open stacked"><svg><use href="#b-word"/></svg></a>
            <a href="#" class="open stacked"><svg><use href="#b-notepad"/></svg></a>
            <a href="#" class="open"><svg><use href="#b-vscode"/></svg></a>
            <a href="#" class="open stacked"><svg><use href="#b-cmd"/></svg></a>
            <a href="#" class="open stacked"><svg><use href="#b-ps"/></svg></a>
            <a href="#" class="open stacked"><svg><use href="#b-git"/></svg></a>
            <a href="#" class="open"><svg><use href="#b-disk"/></svg></a>
            <a href="#" class="open"><svg><use href="#b-bin"/></svg></a>
            <a href="#" class="open"><svg><use href="#b-chrome"/></svg><i class="who azure"></i></a>
            <a href="#" class="open current"><svg><use href="#b-chrome"/></svg><svg class="who"><use href="#rocket"/></svg></a>
            <a href="#" class="open"><svg><use href="#b-window"/></svg></a>
            <a href="#" class="open"><svg><use href="#b-cube"/></svg></a>
        </nav>
        <div class="tray">
            <svg viewBox="0 0 20 20"><path d="M2 14l8-8 8 8"/></svg>
            <svg viewBox="0 0 20 20"><path fill="#aaa" stroke="none" d="M3 14q-4-5 1-7 4-7 9-2 5 0 5 5l-6 4z"/><circle cx="14.500" cy="14.500" r="5.500" fill="#d22" stroke="none"/><path d="M12.500 12.500l4 4M16.500 12.500l-4 4"/></svg>
            <svg viewBox="0 0 20 20"><rect x="6" y="0" width="8" height="14" rx="1" fill="#fff"/><path d="M4 11v4h12v-4M10 15v4M6 19h8"/></svg>
            <svg viewBox="0 0 20 20"><path d="M5 5h13v10H2V9M1 3v4h3V3zM19 8v4"/><path fill="#fff" d="M7 7h9v6H5V9z"/></svg>
            <svg viewBox="0 0 20 20"><path d="M2 18Q3 4 17 2M6 18Q7 8 18 6M10 18q1-7 8-8"/><path d="M14 18q0-3 4-4v4z" fill="#fff"/></svg>
            <svg viewBox="0 0 20 20"><path d="M1 7h3l4-4v14l-4-4H1zM11 7q2 3 0 6M14 5q3 5 0 10M17 3q4 7 0 14"/></svg>
            <span class="lang">ENG</span>
            <time class="clock">10:39 PM<br>08-Sep-25</time>
            <button class="notices" aria-label="Notifications"><svg viewBox="0 0 20 20"><path fill="#fff" stroke="none" d="M0 0h20v16H9l-4 4v-4H0z"/><path stroke="#2b211b" stroke-width="1.500" d="M4 4h12M4 8h12M4 12h8"/></svg><span>16</span></button>
        </div>
    </footer>
</body>
</html>
```
FILE: styles.css
```css
* {
    box-sizing: border-box;
}
body {
    margin: 0;
    height: 100vh;
    display: flex;
    flex-direction: column;
    overflow: hidden;
    font-family: "Open Sans", "Noto Sans Arabic", "DejaVu Sans", sans-serif;
    font-size: 20px;
    line-height: 30px;
    color: #212529;
}
h1, h2, h3, h4, p {
    margin: 0;
    font-weight: 500;
}
a {
    color: inherit;
    text-decoration: none;
}
button, input, select {
    font: inherit;
    color: inherit;
    border: 0;
    padding: 0;
    background: none;
}
.defs {
    position: absolute;
    width: 0;
    height: 0;
}

/* browser */
.browser {
    background: #d3e3fd;
    border-bottom: 2px solid #dde5e8;
}
.tabs {
    height: 50px;
    display: flex;
    align-items: center;
    padding-left: 8px;
}
.tabs svg {
    fill: none;
    stroke: #1f1f1f;
    stroke-width: 2;
}
.tab-search {
    width: 34px;
    height: 34px;
    border-radius: 12px;
    background: #edf3fe;
    display: flex;
    align-items: center;
    justify-content: center;
}
.tab-search svg {
    width: 14px;
    height: 14px;
}
.tab-list {
    flex: 0 1 1540px;
    display: flex;
    margin-left: 5px;
}
.tab-list a {
    flex: 1;
    height: 20px;
    display: flex;
    align-items: center;
    padding-left: 13px;
    border-right: 2px solid #a8c7fa;
}
.tab-list a:nth-child(n+19) {
    flex: 0 1 56px;
}
.tab-list a:last-child {
    border-color: transparent;
}
.tab-list svg {
    width: 20px;
    height: 20px;
    stroke: none;
    stroke-width: 1;
}
.tab-list .word {
    font-size: 5px;
    font-weight: 800;
    color: #2c2f8f;
}
.tab-active {
    width: 49px;
    height: 42px;
    margin-top: 8px;
    margin-left: 3px;
    background: #fff;
    border-radius: 12px 12px 0 0;
    display: flex;
    align-items: center;
    justify-content: flex-end;
    padding: 0 14px 8px 0;
}
.tab-active button {
    display: flex;
}
.tab-active svg {
    width: 14px;
    height: 14px;
}
.tab-new {
    margin-left: 18px;
    display: flex;
}
.tab-new svg {
    width: 14px;
    height: 14px;
}
.window-buttons {
    margin-left: auto;
    display: flex;
}
.window-buttons button {
    width: 57px;
    display: flex;
    justify-content: center;
}
.window-buttons svg {
    width: 14px;
    height: 14px;
    stroke-width: 1;
    stroke: #000;
}
.toolbar {
    height: 57px;
    background: #fff;
    border-radius: 12px 12px 0 0;
    display: flex;
    align-items: center;
    padding: 0 9px 0 5px;
}
.toolbar svg {
    width: 18px;
    height: 18px;
    fill: none;
    stroke: #474747;
    stroke-width: 2;
}
.tool {
    width: 45px;
    display: flex;
    justify-content: center;
}
.toolbar .muted svg {
    stroke: #b0b0b0;
}
.toolbar .big {
    width: 22px;
    height: 22px;
}
.toolbar .avatar {
    width: 26px;
    height: 26px;
    stroke: none;
}
.address {
    flex: 1;
    height: 42px;
    margin: 0 12px 0 10px;
    padding: 0 18px 0 6px;
    border-radius: 21px;
    background: #ecf0fa;
    display: flex;
    align-items: center;
    gap: 18px;
}
.site-info {
    width: 30px;
    height: 30px;
    border-radius: 15px;
    background: #fff;
    display: flex;
    align-items: center;
    justify-content: center;
}
.url {
    flex: 1;
    margin-left: -8px;
    font-size: 16px;
    color: #1f1f1f;
}
.url span {
    color: #474747;
}
.address button {
    display: flex;
}
.address button svg {
    width: 22px;
    height: 22px;
}
.update {
    height: 42px;
    margin-left: 5px;
    padding: 0 16px 0 14px;
    border-radius: 21px;
    background: #d3e3fd;
    color: #041e49;
    font-size: 14px;
    display: flex;
    align-items: center;
    gap: 14px;
}
.toolbar .update svg {
    width: 4px;
    height: 20px;
    fill: #041e49;
    stroke: none;
}

/* page */
.page {
    flex: 1;
    min-height: 0;
    position: relative;
    overflow: hidden;
    padding-right: 19px;
    background: linear-gradient(135deg, #667eea 0%, #764ba2 100%);
}
.icon {
    width: 1em;
    height: 1em;
    fill: currentColor;
    vertical-align: -2px;
    margin-right: 10px;
}
.narrow {
    width: 15px;
}
.wide {
    width: 23px;
}
.wider {
    width: 25px;
}
.user, .plus {
    width: 18px;
}
.navbar {
    height: 78px;
    background: #212529;
    color: rgba(255, 255, 255, 0.55);
    display: flex;
    align-items: center;
    padding: 0 34px 0 30px;
}
.brand {
    color: #fff;
    font-size: 30px;
    font-weight: 600;
}
.brand .wide {
    width: 34px;
}
.nav-links {
    display: flex;
    gap: 27px;
    margin-right: auto;
}
.nav-links a {
    white-space: nowrap;
}
.nav-links .icon, .account .icon {
    margin-right: 0;
}
.nav-links .active {
    color: #fff;
}
.account {
    margin-right: 74px;
}
.caret {
    display: inline-block;
    vertical-align: 4px;
    border: 6px solid transparent;
    border-top-color: currentColor;
    border-bottom: 0;
}
.columns {
    display: flex;
    height: 100%;
}
.sidebar {
    flex: 0 0 317px;
    background: #1e2a37;
    color: #bdc3c7;
    padding: 28px 78px 0 27px;
    display: flex;
    flex-direction: column;
    gap: 12px;
}
.sidebar a {
    padding: 15px 24px;
    border-radius: 10px;
}
.sidebar .active {
    background: #2c5aa0;
    color: #fff;
    transform: translateX(-5px);
}
.content {
    flex: 1;
    margin: 25px 40px 0;
    padding: 37px 52px 0 53px;
    background: #fff;
    border-radius: 20px;
    box-shadow: 0 10px 40px rgba(0, 0, 0, 0.2);
}
.heading {
    display: flex;
    align-items: center;
    justify-content: space-between;
    margin-bottom: 30px;
}
.heading h1 {
    font-size: 34px;
    line-height: 40px;
}
.heading h1 .icon {
    width: 27px;
    height: 36px;
    color: #0d6efd;
    vertical-align: -6px;
}
.btn-group {
    display: flex;
}
.btn {
    padding: 15px 28px 12px;
    font-size: 19px;
    font-weight: 600;
    white-space: nowrap;
}
.btn .icon {
    height: 20px;
    margin-right: 0;
}
.btn:first-child {
    border-radius: 10px 0 0 10px;
}
.btn:last-child {
    border-radius: 0 10px 10px 0;
}
.primary {
    background: #2c5aa0;
    color: #fff;
}
.success {
    background: #36d399;
    color: #fff;
}
.info {
    background: #0dcaf0;
    color: #000;
}
.warning {
    background: #ffc107;
    color: #000;
}
.stats {
    display: grid;
    grid-template-columns: repeat(4, 1fr);
    gap: 30px;
    margin-bottom: 30px;
}
.stat {
    height: 116px;
    padding: 0 20px 0 19px;
    border-radius: 19px;
    color: #fff;
    display: flex;
    align-items: center;
    justify-content: space-between;
    box-shadow: 0 6px 19px rgba(0, 0, 0, 0.1);
}
.stat h2 {
    font-size: 27px;
    line-height: 36px;
    font-weight: 600;
    margin-bottom: 8px;
}
.stat .icon {
    font-size: 40px;
}
.stat .wide {
    width: 46px;
}
.stat .narrow {
    width: 30px;
}
.blue {
    background: #0d6efd;
}
.green {
    background: #198754;
}
.cyan {
    background: #0dcaf0;
}
.yellow {
    background: #ffc107;
}
.card {
    margin-bottom: 30px;
    border-radius: 19px;
    background: #fff;
    box-shadow: 0 6px 19px rgba(0, 0, 0, 0.1);
}
.card-header {
    height: 51px;
    padding: 10px 20px;
    font-size: 25px;
    background: #f7f7f7;
    border-bottom: 1px solid #d2d2d2;
    border-radius: 3px 3px 0 0;
}
.card-header .icon {
    color: #198754;
    vertical-align: -4px;
}
.sessions {
    display: grid;
    grid-template-columns: repeat(3, 1fr);
    gap: 30px;
    padding: 20px 20px 39px;
}
.session {
    padding: 20px;
    border-radius: 19px;
    box-shadow: 0 6px 19px rgba(0, 0, 0, 0.12);
}
.session header {
    display: flex;
    justify-content: space-between;
    margin-bottom: 11px;
}
.session h4 {
    font-size: 20px;
    line-height: 26px;
    font-weight: 600;
}
.badge {
    padding: 2px 15px 3px;
    border-radius: 18px;
    background: #198754;
    color: #fff;
    font-size: 15px;
    font-weight: 600;
}
.session p {
    margin-bottom: 5px;
    font-weight: 400;
}
.session b {
    font-weight: 600;
}
.session .btn {
    flex: 1 1 auto;
    height: 53px;
    padding: 0;
}
.session .btn-group {
    margin-top: 9px;
}
.filters {
    padding: 20px;
    display: grid;
    grid-template-columns: repeat(4, 1fr);
    gap: 30px;
}
.filters label {
    display: block;
    margin-bottom: 10px;
}
.field {
    width: 100%;
    height: 47px;
    padding: 0 15px;
    border: 1px solid #dee2e6;
    border-radius: 8px;
    background: #fff;
}
.filters input {
    font-size: 21px;
}
select.field {
    appearance: none;
    padding-right: 44px;
    background: #fff url("data:image/svg+xml,%3Csvg xmlns='http://www.w3.org/2000/svg' viewBox='0 0 16 16'%3E%3Cpath fill='none' stroke='%23343a40' stroke-linecap='round' stroke-width='2' d='m2 5 6 6 6-6'/%3E%3C/svg%3E") no-repeat right 18px center / 15px;
}
.field::placeholder {
    color: #595c5f;
}
.date {
    display: flex;
    align-items: center;
    padding-right: 20px;
}
.date input {
    flex: 1;
    min-width: 0;
}
.date input::placeholder {
    color: #212529;
}
.date svg {
    width: 17px;
    height: 18px;
}
.overlay {
    position: absolute;
    inset: 0;
    background: rgba(0, 0, 0, 0.4);
    display: flex;
    align-items: center;
    justify-content: center;
}
.modal {
    width: 640px;
    padding: 50px 20px 31px;
    border-radius: 6px;
    background: #fff;
    color: #545454;
    display: flex;
    flex-direction: column;
    align-items: center;
}
.modal-icon {
    width: 110px;
    height: 110px;
    fill: none;
    stroke: #f27474;
    stroke-width: 5;
    stroke-linecap: round;
}
.modal h2 {
    margin-top: 43px;
    font-size: 37px;
    line-height: 46px;
    font-weight: 600;
}
.modal p {
    margin-top: 20px;
    font-size: 22px;
    line-height: 30px;
    font-weight: 400;
}
.modal button {
    width: 96px;
    height: 55px;
    margin-top: 39px;
    border-radius: 5px;
    background: #ef4444;
    box-shadow: 0 0 0 4px rgba(239, 68, 68, 0.5);
    color: #fff;
    font-size: 19px;
    font-weight: 700;
}

/* taskbar */
.taskbar {
    height: 50px;
    background: linear-gradient(90deg, #1d1b1a, #27221b 25%, #1f1d1b 45%, #2c1f18 60%, #281e18 80%, #33251c);
    color: #fff;
    display: flex;
}
.start {
    width: 60px;
    display: flex;
    align-items: center;
    justify-content: center;
}
.start svg {
    width: 20px;
    height: 20px;
    fill: #fff;
}
.search-box {
    width: 360px;
    padding: 0 12px 0 15px;
    border: 1px solid #c8c8c8;
    background: #f2f2f2;
    color: #333;
    display: flex;
    align-items: center;
    gap: 13px;
}
.lens {
    flex: none;
    width: 21px;
    height: 21px;
    fill: none;
    stroke: #222;
    stroke-width: 1.5;
}
.search-box input {
    flex: 1;
    min-width: 0;
    font-size: 18px;
}
.search-box input::placeholder {
    color: #333;
}
.sparkles {
    width: 76px;
    height: 32px;
}
.task-view {
    width: 65px;
    padding-right: 6px;
    display: flex;
    align-items: center;
    justify-content: center;
}
.task-view svg {
    width: 20px;
    height: 20px;
    fill: none;
    stroke: #fff;
}
.apps {
    flex: 0 1 1057px;
    display: flex;
}
.apps a {
    flex: 1;
    position: relative;
    display: flex;
    align-items: center;
    justify-content: center;
    margin-right: 1px;
}
.apps svg {
    width: 31px;
    height: 31px;
}
.open::after {
    content: "";
    position: absolute;
    left: 5px;
    right: 5px;
    bottom: 0;
    height: 3px;
    background: #fcc5b0;
}
.stacked::after {
    border-right: 11px solid #c89a8a;
}
.current {
    background: #5c504b;
}
.current::after {
    left: 0;
    right: 0;
}
.apps .who {
    position: absolute;
    left: 24px;
    top: 22px;
    width: 20px;
    height: 20px;
    border-radius: 10px;
    font-style: normal;
    font-size: 11px;
    line-height: 20px;
    text-align: center;
}
.teal {
    background: #0b5345;
}
.pink {
    background: radial-gradient(#6b8f8f 35%, #e58a9a 50%, #bbb);
}
.pale {
    background: radial-gradient(#6fbf6f 25%, #fff 35%, #7fbf7f 50%, #fff 60%);
}
.azure {
    background: #1877f2;
}
.tray {
    margin-left: auto;
    padding-right: 18px;
    display: flex;
    align-items: center;
    gap: 10px;
    font-size: 14px;
    line-height: 23px;
}
.tray svg {
    width: 21px;
    height: 21px;
    fill: none;
    stroke: #fff;
}
.lang {
    margin-left: -4px;
}
.clock {
    margin: 0 13px 0 6px;
    font-size: 15px;
    text-align: center;
}
.notices {
    position: relative;
    width: 32px;
    display: flex;
}
.notices span {
    position: absolute;
    left: 8px;
    top: 12px;
    width: 23px;
    height: 23px;
    border: 1px solid #999;
    border-radius: 12px;
    background: #3a3633;
    font-size: 13px;
    line-height: 20px;
    text-align: center;
}
```
